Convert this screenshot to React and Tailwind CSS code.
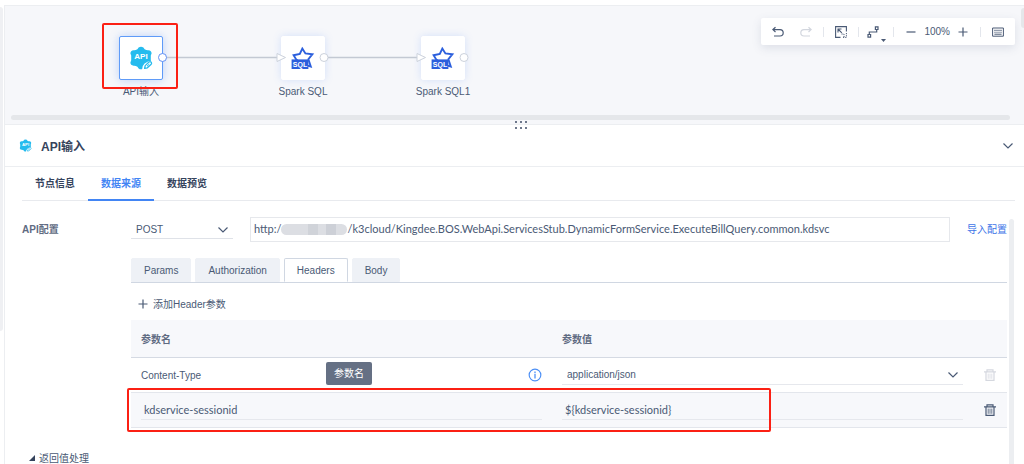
import { useState } from 'react'
import clsx from 'clsx'

const nodes = [
  { id: 'api', label: 'API输入', icon: ApiIcon, selected: true, place: 'left-[114px]' },
  { id: 'sql', label: 'Spark SQL', icon: SparkIcon, place: 'left-[276px]' },
  { id: 'sql1', label: 'Spark SQL1', icon: SparkIcon, place: 'left-[416px]' },
]

const panelTabs = ['节点信息', '数据来源', '数据预览']
const requestTabs = ['Params', 'Authorization', 'Headers', 'Body']

function ApiIcon({ className }) {
  return (
    <svg className={className} viewBox="0 0 24 24" aria-hidden="true">
      <path
        d="M9.6 1.6 Q12 -.2 14.4 1.6 L15.6 3.2 Q17.5 4.4 19.4 4.2 Q22.6 4.6 22.6 7.4 L21.8 9.6 V14.2 L22.6 16.6 Q22.6 19.4 19.4 19.8 Q17 19.6 15.6 20.8 L14.4 22.4 Q12 24.2 9.6 22.4 L8.4 20.8 Q6.5 19.6 4.6 19.8 Q1.4 19.4 1.4 16.6 L2.2 14.2 V9.6 L1.4 7.4 Q1.4 4.6 4.6 4.2 Q6.5 4.4 8.4 3.2Z"
        fill="#25bbee"
      />
      <text x="12" y="13" textAnchor="middle" fontSize="8" fontWeight="700" fill="#fff" fontFamily="Liberation Sans, sans-serif">
        API
      </text>
      <path d="M13 24 Q12.6 16 24 14.6 V24Z" fill="#fff" />
      <path d="M15.6 22.4 L16.2 19.6 L20 16 Q21.2 15.2 22.2 16.2 Q23 17.2 22.2 18.2 L18.4 21.8Z" fill="#fff" stroke="#25bbee" strokeWidth="1.3" strokeLinejoin="round" />
      <path d="M18 20.2 L20.2 18.2" stroke="#25bbee" strokeWidth="1" />
    </svg>
  )
}

function SparkIcon({ className }) {
  return (
    <svg className={className} viewBox="0 0 24 24" aria-hidden="true">
      <path
        d="M11.3 2.6 L14.4 7.4 L21.4 8.2 L17.4 13.2 L19.8 20.6 L11 18 L5.2 13.4 L2.6 9.2 L8.8 8Z"
        fill="#fff"
        stroke="#2b5fdd"
        strokeWidth="1.9"
        strokeLinejoin="miter"
      />
      <rect x="0.6" y="13.4" width="16.8" height="9.6" fill="#2b5fdd" />
      <text x="9" y="20.7" textAnchor="middle" fontSize="7" fontWeight="700" fill="#fff" fontFamily="Liberation Sans, sans-serif">
        SQL
      </text>
    </svg>
  )
}

function Icon({ className, children, size = 12 }) {
  return (
    <svg
      className={clsx('shrink-0', className)}
      width={size}
      height={size}
      viewBox="0 0 12 12"
      fill="none"
      stroke="currentColor"
      aria-hidden="true"
    >
      {children}
    </svg>
  )
}

function Chevron({ className }) {
  return (
    <Icon className={className}>
      <path d="M1.5 3.5 L6 8 L10.5 3.5" strokeWidth="1.2" />
    </Icon>
  )
}

function Plus({ className }) {
  return (
    <Icon className={className}>
      <path d="M6 1.5 V10.5 M1.5 6 H10.5" strokeWidth="1.2" />
    </Icon>
  )
}

function Trash() {
  return (
    <Icon className="mx-auto">
      <path d="M0 2.9 H12 M3 2.7 V.8 H9 V2.7 M2 3 V11.3 H10 V3" strokeWidth="1.2" />
      <path d="M4.2 4.6 V9.8 M6 4.6 V9.8 M7.8 4.6 V9.8" strokeWidth=".8" />
    </Icon>
  )
}

function Separator() {
  return <span className="h-[10px] w-px bg-[#e3e6ec]" />
}

function Toolbar() {
  return (
    <div className="absolute top-[12px] right-[9px] flex h-[27px] items-center gap-[11px] rounded-xs bg-white px-[11px] shadow-[0_3px_10px_rgba(80,95,125,0.15)]">
      <div className="flex gap-4">
        <button aria-label="撤销">
          <Icon>
            <path d="M3.5 1.2 L.9 3.6 L3.5 6 M1 3.6 H8 Q11.2 3.8 11.2 6.8 Q11.2 10 8 10 H2" strokeWidth="1.2" />
          </Icon>
        </button>
        <button className="text-[#d2d6de]" aria-label="重做" disabled>
          <Icon>
            <path d="M8.5 1.2 L11.1 3.6 L8.5 6 M11 3.6 H4 Q.8 3.8 .8 6.8 Q.8 10 4 10 H10" strokeWidth="1.2" />
          </Icon>
        </button>
      </div>
      <Separator />
      <button aria-label="适应画布">
        <Icon>
          <path d="M5.5 11.4 H.6 V.6 H11.4 V5.5 M3 6.5 V3 H6.5 M3 3 L6.8 6.8" strokeWidth="1.1" />
          <path d="M11.4 7 V11.4 H7 M6.5 8 H9 V11" strokeWidth="1" strokeDasharray="1.2 1" />
        </Icon>
      </button>
      <Separator />
      <button className="relative -ml-[3px] pr-[3px]" aria-label="连线样式">
        <Icon>
          <path d="M1 8.5 H3.6 V11.2 H1Z M8.4 .8 H11 V3.5 H8.4Z M2.3 8.5 V6 H9.7 V3.5" strokeWidth="1.2" />
        </Icon>
        <svg className="absolute top-[13px] left-[14px]" width="5" height="3" viewBox="0 0 5 3" aria-hidden="true">
          <path d="M0 0 H5 L2.5 3Z" fill="currentColor" />
        </svg>
      </button>
      <Separator />
      <div className="flex items-center gap-[7px]">
        <button aria-label="缩小">
          <Icon>
            <path d="M1.5 6 H10.5" strokeWidth="1.2" />
          </Icon>
        </button>
        <span>100%</span>
        <button aria-label="放大">
          <Plus />
        </button>
      </div>
      <Separator />
      <button aria-label="快捷键">
        <Icon>
          <path d="M.6 2 H11.4 V10.2 H.6Z" strokeWidth="1" />
          <path d="M2.4 4.4 H9.8 M2.4 6.2 H9.8" strokeWidth="1.1" strokeDasharray="1.2 .8" />
          <path d="M2.4 8.2 H9.6" strokeWidth="1" />
        </Icon>
      </button>
    </div>
  )
}

function Canvas() {
  return (
    <section className="relative h-[120px] shrink-0 overflow-hidden border-t border-b border-[#eceef1] bg-[#f6f7fa]">
      {nodes.map(({ id, label, icon: NodeIcon, selected, place }) => (
        <div key={id} className={clsx('absolute top-[30px] flex w-[44px] flex-col items-center', place)}>
          <div
            className={clsx(
              'flex size-[44px] items-center justify-center rounded-xs border bg-white',
              selected
                ? 'border-[#5f9bf8] shadow-[0_0_10px_rgba(80,140,250,0.35)]'
                : 'border-white shadow-[0_0_8px_rgba(80,140,250,0.2)]'
            )}
          >
            <NodeIcon className="size-6" />
          </div>
          <span className="mt-[5px] leading-[14px] whitespace-nowrap">{label}</span>
        </div>
      ))}

      {/* connectors and ports */}
      <svg className="absolute top-0 left-0" width="480" height="110" aria-hidden="true">
        <path d="M158 51.5 H272 M319 51.5 H412" stroke="#c3c9d3" strokeWidth="1.5" />
        <g fill="#fff" stroke="#ccd2dc">
          <path d="M272 47.5 L280.5 51.5 L272 55.5Z" />
          <path d="M412 47.5 L420.5 51.5 L412 55.5Z" />
          <circle cx="319" cy="51.5" r="4" />
          <circle cx="459" cy="51.5" r="4" />
          <circle cx="157.5" cy="51.5" r="4" stroke="#5f8ff5" />
        </g>
      </svg>

      <div className="absolute top-[17px] left-[97px] h-[66px] w-[76px] rounded-xs border-[2px] border-[#fb2014]" />
      <Toolbar />
      <div className="absolute right-[14px] bottom-[4px] left-[6px] h-[5px] rounded-full bg-[#e5e7ea]" />
      <div className="absolute top-[2px] right-0 h-[20px] w-[3px] rounded-l-full bg-[#e5e7ea]" />
    </section>
  )
}

function HeaderTable() {
  return (
    <div className="relative">
      <table className="w-full table-fixed border-separate border-spacing-0 text-left [&_td]:border-b [&_td]:border-[#e3e6ec] [&_th]:border-b [&_th]:border-[#d5dae3]">
        <colgroup>
          <col />
          <col />
          <col className="w-[34px]" />
        </colgroup>
        <thead>
          <tr className="h-[38px] bg-[#f7f8fb]">
            <th className="px-[10px] pt-[2px] text-[#5f6b82]">参数名</th>
            <th className="px-[10px] pt-[2px] text-[#5f6b82]">参数值</th>
            <th />
          </tr>
        </thead>
        <tbody>
          <tr className="h-[35px]">
            <td className="px-[10px]">
              <div className="flex items-center justify-between">
                Content-Type
                <Icon size={14} className="text-[#4c8ff5]">
                  <circle cx="6" cy="6" r="5" />
                  <path d="M6 5 V9 M6 3 V4.2" strokeWidth="1.1" />
                </Icon>
              </div>
            </td>
            <td className="px-[10px]">
              <div className="relative border-b border-[#e6e8ed]">
                <select aria-label="Content-Type" className="block h-[18px] w-full appearance-none pl-[5px]">
                  <option>application/json</option>
                </select>
                <Chevron className="pointer-events-none absolute top-[3px] right-[4px]" />
              </div>
            </td>
            <td>
              <button className="block w-full text-[#d5d8df]" aria-label="删除 Content-Type" disabled>
                <Trash />
              </button>
            </td>
          </tr>
          <tr className="h-[35px] bg-[#f7f8fb]">
            <td className="px-[10px]">
              <input
                aria-label="参数名"
                className="block h-[19px] w-full border-b border-[#e6e8ed] pl-[3px] font-['Lato','Noto_Sans_CJK_SC',sans-serif] text-[11px]"
                defaultValue="kdservice-sessionid"
              />
            </td>
            <td className="px-[10px]">
              <input
                aria-label="参数值"
                className="block h-[19px] w-full border-b border-[#e6e8ed] pl-[3px] font-['Lato','Noto_Sans_CJK_SC',sans-serif] text-[11px]"
                defaultValue="${kdservice-sessionid}"
              />
            </td>
            <td>
              <button className="block w-full" aria-label="删除 kdservice-sessionid">
                <Trash />
              </button>
            </td>
          </tr>
        </tbody>
      </table>
      <div role="tooltip" className="absolute top-[42px] left-[195px] flex h-[23px] w-[46px] items-center justify-center rounded-xs bg-[#657084] text-white">
        参数名
      </div>
      <div className="pointer-events-none absolute top-[68px] left-[-4px] h-[44px] w-[644px] rounded-xs border-[2px] border-[#fb2014]" />
    </div>
  )
}

export default function App() {
  const [panelTab, setPanelTab] = useState('数据来源')
  const [requestTab, setRequestTab] = useState('Headers')

  return (
    <div className="flex h-screen overflow-hidden bg-white pt-[5px] font-['Liberation_Sans','Noto_Sans_CJK_SC',sans-serif] text-[10px] text-[#4a5a75]">
      <div className="w-[5px] shrink-0 border-r border-[#eceef1]">
        <div className="mt-[2px] h-[324px] w-[3px] rounded-r-full bg-[#eff0f3]" />
      </div>

      <main className="flex min-w-0 grow flex-col">
        <Canvas />

        <header className="relative flex h-[42px] shrink-0 items-center border-b border-[#eceef1] pr-[10px] pl-[14px]">
          <div className="absolute top-[-4px] left-1/2 grid grid-cols-3 gap-x-[3px] gap-y-[4px]">
            {[0, 1, 2, 3, 4, 5].map((dot) => (
              <span key={dot} className="size-[2px] bg-[#6d778b]" />
            ))}
          </div>
          <ApiIcon className="size-[13px]" />
          <h1 className="ml-[9px] pt-[2px] text-[12px] font-bold text-[#35435c]">API输入</h1>
          <button className="ml-auto" aria-label="收起">
            <Chevron />
          </button>
        </header>

        <nav className="mr-[9px] ml-[17px] flex h-[34px] shrink-0 border-b border-[#e8eaee]">
          {panelTabs.map((tab) => (
            <button
              key={tab}
              className={clsx(
                '-mb-px w-[66px] border-b-2 font-bold',
                tab === panelTab ? 'border-[#4285f4] text-[#4285f4]' : 'border-transparent text-[#35435c]'
              )}
              onClick={() => setPanelTab(tab)}
            >
              {tab}
            </button>
          ))}
        </nav>

        <section className="flex grow pt-4 pr-[10px] pl-[17px]">
          <div className="min-w-0 grow">
            <div className="flex h-[25px] items-center">
              <label htmlFor="method" className="w-[109px] shrink-0 font-bold text-[#5f6b82]">
                API配置
              </label>
              <div className="relative w-[102px] shrink-0 border-b border-[#dfe2e8]">
                <select id="method" className="block h-[18px] w-full appearance-none pl-[5px]">
                  <option>POST</option>
                </select>
                <Chevron className="pointer-events-none absolute top-[4px] right-[4px]" />
              </div>
              <div className="ml-[17px] flex h-[25px] min-w-0 grow items-center border border-[#e6e8ec] pl-[3px] font-['Lato','Noto_Sans_CJK_SC',sans-serif] text-[11px]">
                <span>http:/</span>
                <span className="flex h-[11px] w-[66px] shrink-0 overflow-hidden rounded-full bg-[#dcdee3]">
                  <span className="ml-[27px] w-[10px] bg-[#d0d3d9]" />
                  <span className="ml-[8px] w-[10px] bg-[#cdd0d7]" />
                </span>
                <input
                  aria-label="URL"
                  className="min-w-0 grow"
                  defaultValue="/k3cloud/Kingdee.BOS.WebApi.ServicesStub.DynamicFormService.ExecuteBillQuery.common.kdsvc"
                />
              </div>
              <a href="#import" className="ml-[17px] shrink-0 text-[#4075e8]">
                导入配置
              </a>
            </div>

            <div className="pt-4 pl-[109px]">
              <div className="flex h-[25px] gap-1 border-b border-[#d0d7e2]">
                {requestTabs.map((tab) => (
                  <button
                    key={tab}
                    className={clsx(
                      'rounded-t-xs border px-3',
                      tab === requestTab ? 'border-[#d0d7e2] border-b-white bg-white' : 'border-[#eef1f6] bg-[#eef1f6]'
                    )}
                    onClick={() => setRequestTab(tab)}
                  >
                    {tab}
                  </button>
                ))}
              </div>
              <button className="flex h-[37px] items-center gap-1 pt-[5px] pl-[6px]">
                <Plus />
                添加Header参数
              </button>
              <HeaderTable />
            </div>

            <button className="mt-5 flex h-[20px] items-center gap-1 pl-[7px]">
              <svg width="6" height="6" viewBox="0 0 6 6" aria-hidden="true">
                <path d="M0 6 L6 0 V6Z" fill="#35435c" />
              </svg>
              返回值处理
            </button>
          </div>
          <div className="ml-[2px] mt-[2px] w-[5px] shrink-0 rounded-t-full bg-[#eceef1]" />
        </section>
      </main>
    </div>
  )
}
